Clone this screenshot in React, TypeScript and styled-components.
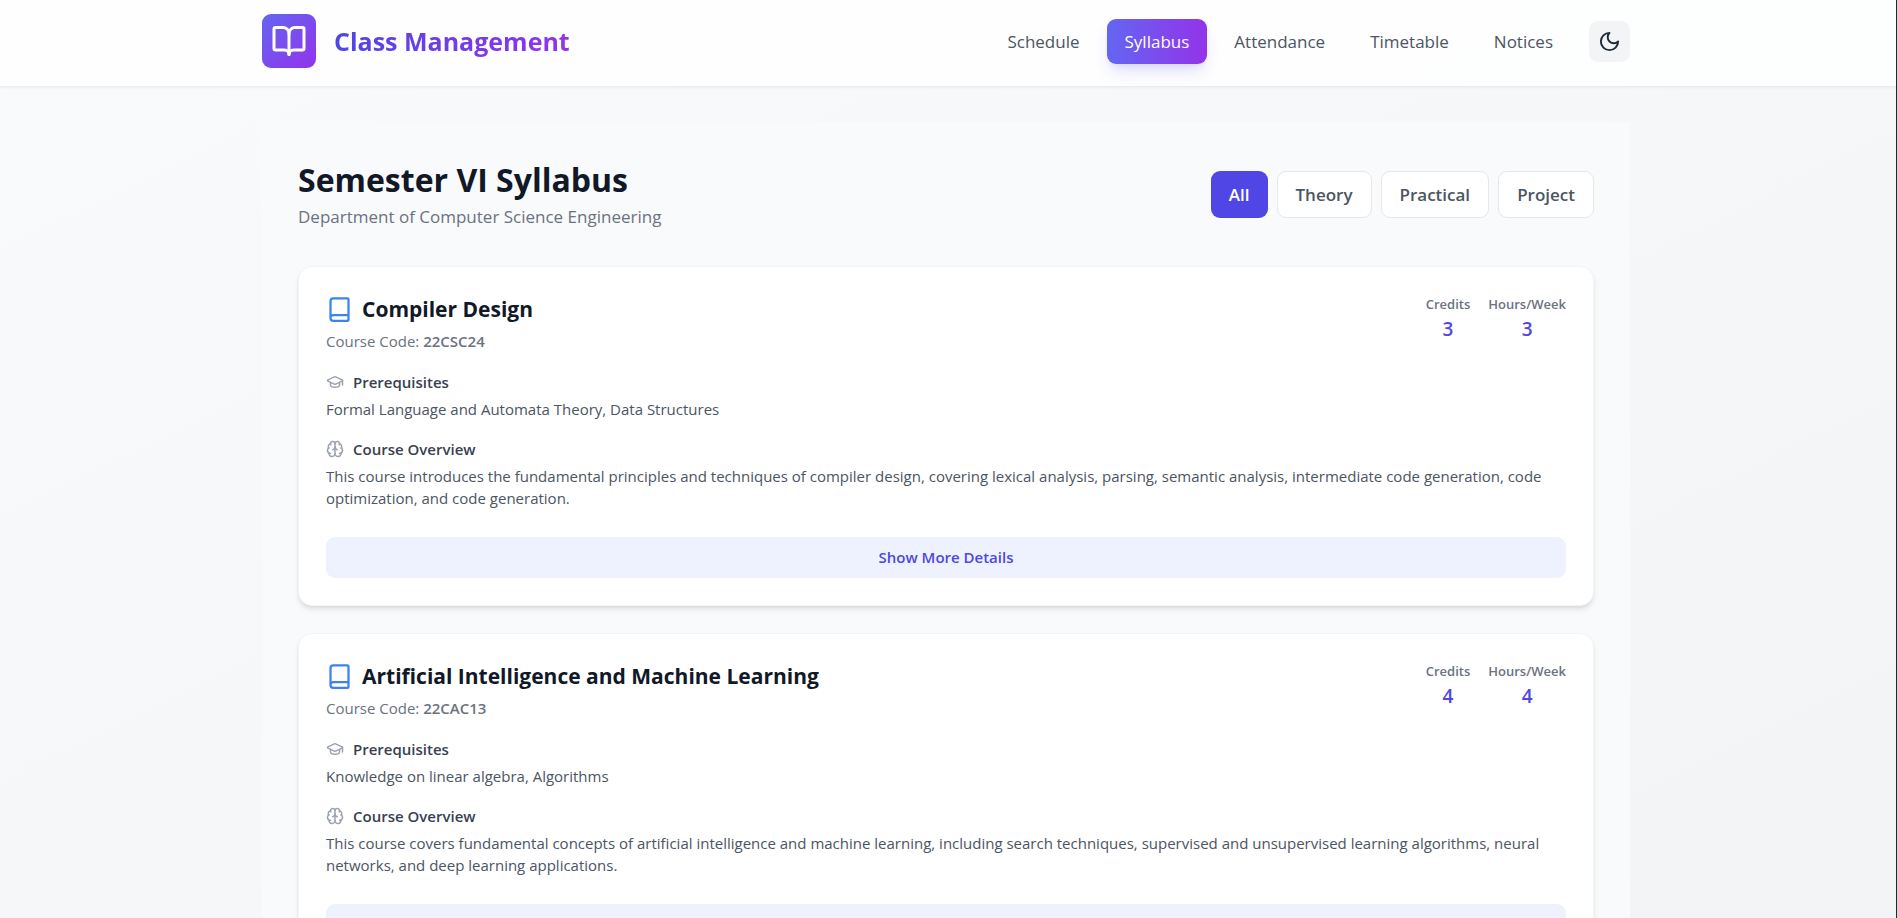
import React, { useState } from "react";
import styled, { createGlobalStyle, css } from "styled-components";
import { BookOpen, Book, GraduationCap, Brain } from "lucide-react";

const GlobalStyle = createGlobalStyle`
  *, *::before, *::after { box-sizing: border-box; }
  html { background: #1f2937; }
  body {
    margin: 0;
    font-family: "Segoe UI", "Open Sans", "Noto Sans", sans-serif;
    font-size: 17px;
    line-height: 24px;
    color: #111827;
  }
  h1, h2, h3, p, dl, dd, dt { margin: 0; }
  button { font: inherit; cursor: pointer; }
`;

const Page = styled.div`
  height: 100vh;
  overflow: hidden;
  margin-right: 1px;
  padding-right: 4px;
  background: linear-gradient(to bottom right, #f9fafb, #f3f4f6);
`;

const Header = styled.header`
  margin-right: -4px;
  padding-right: 4px;
  background: rgba(255, 255, 255, 0.8);
  box-shadow: 0 1px 3px rgba(0, 0, 0, 0.08);
`;

const Container = styled.div`
  max-width: 1440px;
  margin: 0 auto;
  padding: 0 36px;
`;

const Bar = styled(Container)`
  display: flex;
  align-items: center;
  justify-content: space-between;
  height: 86px;
  padding-bottom: 4px;
`;

const Brand = styled.a`
  display: flex;
  align-items: center;
  gap: 18px;
  text-decoration: none;
`;

const Logo = styled.span`
  display: flex;
  padding: 9px;
  border-radius: 9px;
  color: #fff;
  background: linear-gradient(to bottom right, #6366f1, #9333ea);
`;

const BrandName = styled.span`
  font-size: 25px;
  line-height: 36px;
  font-weight: 700;
  color: transparent;
  background: linear-gradient(to right, #4f46e5, #9333ea);
  background-clip: text;
`;

const Nav = styled.nav`
  display: flex;
  align-items: center;
  gap: 9px;
`;

const NavLink = styled.a<{ $active?: boolean }>`
  padding: 9px 18px;
  border-radius: 9px;
  line-height: 27px;
  color: #4b5563;
  text-decoration: none;
  ${(p) =>
    p.$active &&
    css`
      color: #fff;
      background: linear-gradient(to right, #6366f1, #9333ea);
      box-shadow: 0 10px 15px -3px rgba(99, 102, 241, 0.2), 0 4px 6px -4px rgba(99, 102, 241, 0.2);
    `}
`;

const ThemeButton = styled.button`
  display: flex;
  margin-left: 9px;
  padding: 9px;
  border: 0;
  border-radius: 9px;
  color: #1f2937;
  background: #f3f4f6;
`;

const Main = styled(Container)`
  padding-top: 36px;
`;

const Panel = styled.main`
  padding: 36px;
  background: #f9fafb;
`;

const PanelHead = styled.div`
  display: flex;
  align-items: center;
  justify-content: space-between;
  margin-bottom: 36px;
`;

const Title = styled.h1`
  margin-bottom: 2px;
  font-size: 32px;
  line-height: 43px;
  font-weight: 700;
`;

const Subtitle = styled.p`
  line-height: 27px;
  color: #6b7280;
`;

const Filters = styled.div`
  display: flex;
  gap: 9px;
`;

const FilterButton = styled.button<{ $active: boolean }>`
  padding: 9px 18px;
  border: ${(p) => (p.$active ? "0" : "1px solid #e5e7eb")};
  border-radius: 9px;
  line-height: 27px;
  font-weight: 600;
  color: ${(p) => (p.$active ? "#fff" : "#4b5563")};
  background: ${(p) => (p.$active ? "#4f46e5" : "#fff")};
`;

const CourseList = styled.div`
  display: grid;
  gap: 27px;
`;

const Card = styled.article`
  padding: 27px;
  border: 1px solid #f3f4f6;
  border-radius: 14px;
  background: #fff;
  box-shadow: 0 4px 6px -1px rgba(0, 0, 0, 0.1), 0 2px 4px -2px rgba(0, 0, 0, 0.1);
`;

const CardHead = styled.div`
  display: flex;
  align-items: flex-start;
  justify-content: space-between;
  margin-bottom: 18px;
`;

const CourseTitle = styled.h2`
  display: flex;
  align-items: center;
  gap: 9px;
  font-size: 21px;
  line-height: 31px;
  font-weight: 700;
  svg { color: #3b82f6; }
`;

const Code = styled.p`
  margin-top: 4px;
  font-size: 15px;
  color: #6b7280;
  strong { font-weight: 600; }
`;

const Stats = styled.dl`
  display: flex;
  gap: 18px;
  text-align: center;
`;

const StatLabel = styled.dt`
  font-size: 13px;
  line-height: 20px;
  font-weight: 600;
  color: #6b7280;
`;

const StatValue = styled.dd`
  font-size: 19px;
  line-height: 30px;
  font-weight: 600;
  color: #4f46e5;
`;

const Section = styled.section`
  margin-bottom: 18px;
  font-size: 15px;
`;

const SectionTitle = styled.h3`
  display: flex;
  align-items: center;
  gap: 9px;
  margin-bottom: 5px;
  font-size: 15px;
  line-height: 22px;
  font-weight: 600;
  color: #374151;
  svg { color: #9ca3af; }
`;

const SectionText = styled.p`
  line-height: 22px;
  color: #4b5563;
`;

const DetailsButton = styled.button`
  width: 100%;
  margin-top: 10px;
  padding: 9px 18px;
  border: 0;
  border-radius: 9px;
  font-size: 15px;
  line-height: 23px;
  font-weight: 600;
  color: #4f46e5;
  background: #eef2ff;
`;

function MoonIcon() {
  return (
    <svg
      width="23"
      height="23"
      viewBox="0 0 24 24"
      fill="none"
      stroke="currentColor"
      strokeWidth="2"
      strokeLinecap="round"
      strokeLinejoin="round"
      aria-hidden="true"
    >
      <path d="M12 3a6 6 0 0 0 9 9 9 9 0 1 1-9-9Z" />
    </svg>
  );
}

const links = ["Schedule", "Syllabus", "Attendance", "Timetable", "Notices"];
const filters = ["All", "Theory", "Practical", "Project"];

const courses = [
  {
    name: "Compiler Design",
    code: "22CSC24",
    credits: 3,
    hours: 3,
    prerequisites: "Formal Language and Automata Theory, Data Structures",
    overview:
      "This course introduces the fundamental principles and techniques of compiler design, covering lexical analysis, parsing, semantic analysis, intermediate code generation, code optimization, and code generation.",
  },
  {
    name: "Artificial Intelligence and Machine Learning",
    code: "22CAC13",
    credits: 4,
    hours: 4,
    prerequisites: "Knowledge on linear algebra, Algorithms",
    overview:
      "This course covers fundamental concepts of artificial intelligence and machine learning, including search techniques, supervised and unsupervised learning algorithms, neural networks, and deep learning applications.",
  },
];

export default function App() {
  const [filter, setFilter] = useState("All");
  return (
    <Page>
      <GlobalStyle />
      <Header>
        <Bar>
          <Brand href="#">
            <Logo><BookOpen size={36} /></Logo>
            <BrandName>Class Management</BrandName>
          </Brand>
          <Nav>
            {links.map((label) => (
              <NavLink key={label} href="#" $active={label === "Syllabus"}>{label}</NavLink>
            ))}
            <ThemeButton aria-label="Toggle dark mode"><MoonIcon /></ThemeButton>
          </Nav>
        </Bar>
      </Header>
      <Main>
        <Panel>
          <PanelHead>
            <div>
              <Title>Semester VI Syllabus</Title>
              <Subtitle>Department of Computer Science Engineering</Subtitle>
            </div>
            <Filters>
              {filters.map((label) => (
                <FilterButton key={label} $active={label === filter} onClick={() => setFilter(label)}>
                  {label}
                </FilterButton>
              ))}
            </Filters>
          </PanelHead>
          <CourseList>
            {courses.map((course) => (
              <Card key={course.code}>
                <CardHead>
                  <div>
                    <CourseTitle><Book size={27} />{course.name}</CourseTitle>
                    <Code>Course Code: <strong>{course.code}</strong></Code>
                  </div>
                  <Stats>
                    <div>
                      <StatLabel>Credits</StatLabel>
                      <StatValue>{course.credits}</StatValue>
                    </div>
                    <div>
                      <StatLabel>Hours/Week</StatLabel>
                      <StatValue>{course.hours}</StatValue>
                    </div>
                  </Stats>
                </CardHead>
                <Section>
                  <SectionTitle><GraduationCap size={18} />Prerequisites</SectionTitle>
                  <SectionText>{course.prerequisites}</SectionText>
                </Section>
                <Section>
                  <SectionTitle><Brain size={18} />Course Overview</SectionTitle>
                  <SectionText>{course.overview}</SectionText>
                </Section>
                <DetailsButton>Show More Details</DetailsButton>
              </Card>
            ))}
          </CourseList>
        </Panel>
      </Main>
    </Page>
  );
}
